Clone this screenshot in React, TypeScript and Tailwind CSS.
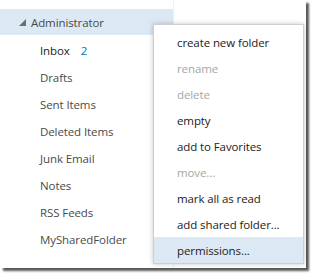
import React from 'react';

const folders = ['Inbox', 'Drafts', 'Sent Items', 'Deleted Items', 'Junk Email', 'Notes', 'RSS Feeds', 'MySharedFolder'];

const menuItems: { label: string; disabled?: boolean; active?: boolean }[] = [
  { label: 'create new folder' },
  { label: 'rename', disabled: true },
  { label: 'delete', disabled: true },
  { label: 'empty' },
  { label: 'add to Favorites' },
  { label: 'move...', disabled: true },
  { label: 'mark all as read' },
  { label: 'add shared folder...' },
  { label: 'permissions...', active: true },
];

export default function App() {
  return (
    <div className="w-[311px] h-[275px] bg-white overflow-hidden" style={{ fontFamily: '"Open Sans", sans-serif' }}>
      <div className="relative w-[306px] h-[268px] bg-white flex shadow-[3px_3px_2px_rgba(0,0,0,0.65)]">
        {/* Folder pane */}
        <div className="w-[173px] pt-[9px] text-[11.5px] tracking-[-0.1px] text-[#4a4a4a]">
          <div className="h-[26px] bg-[#dde8f5] flex items-center pl-[19px] pt-px">
            <svg width="7" height="7" viewBox="0 0 7 7" className="mr-[5px]">
              <polygon points="7,0 7,7 0,7" fill="#6d6d6d" />
            </svg>
            <span>Administrator</span>
          </div>
          <ul className="pt-[2px]">
            {folders.map((f) => (
              <li key={f} className="h-[27px] flex items-center pl-[40px]">
                {f === 'Inbox' ? (
                  <>
                    <span className="text-[#222]">Inbox</span>
                    <span className="ml-[11px] text-[#0072c6]">2</span>
                  </>
                ) : (
                  f
                )}
              </li>
            ))}
          </ul>
        </div>
        <div className="flex-1 border-l border-[#f0f0f0]" />

        {/* Context menu */}
        <div className="absolute left-[153px] top-[24px] w-[151px] h-[240px] bg-white border border-[#cfcfcf] shadow-[0_0_5px_rgba(0,0,0,0.22)] pt-[4px] text-[11.5px] tracking-[-0.1px]">
          {menuItems.map((m) => (
            <div
              key={m.label}
              className={
                'h-[26px] flex items-center pl-[23px] pt-px ' +
                (m.disabled ? 'text-[#a6a6a6] ' : 'text-[#222] ') +
                (m.active ? 'bg-[#dde8f5]' : '')
              }
            >
              {m.label}
            </div>
          ))}
        </div>
      </div>
    </div>
  );
}
